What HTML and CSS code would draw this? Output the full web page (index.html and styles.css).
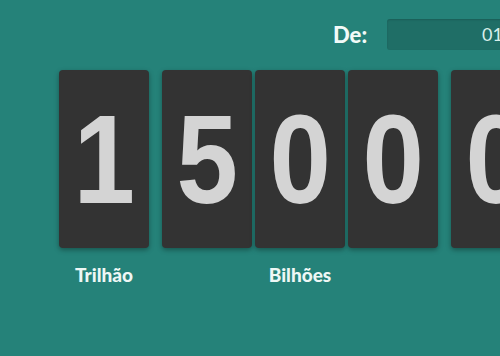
FILE: index.html
```html
<!DOCTYPE html>
<html lang="pt">
<head>
    <meta charset="UTF-8">
    <meta name="viewport" content="width=device-width, initial-scale=1.0">
    <title>Contador</title>
    <link rel="stylesheet" href="styles.css">
</head>
<body>
    <div class="page">
        <div class="header">
            <span class="label-de">De:</span>
            <div class="field">01/01/2000</div>
        </div>

        <div class="counter">
            <div class="group">
                <div class="card"><span class="digit">1</span></div>
            </div>
            <div class="group">
                <div class="card"><span class="digit">5</span></div>
                <div class="card"><span class="digit">0</span></div>
                <div class="card"><span class="digit">0</span></div>
            </div>
            <div class="group">
                <div class="card"><span class="digit">0</span></div>
                <div class="card"><span class="digit">0</span></div>
                <div class="card"><span class="digit">0</span></div>
            </div>
        </div>

        <div class="labels">
            <div class="unit unit-1">Trilhão</div>
            <div class="unit unit-3">Bilhões</div>
            <div class="unit unit-3">Milhões</div>
        </div>
    </div>
</body>
</html>
```

FILE: styles.css
```css
body, html {
    margin: 0;
    padding: 0;
    height: 100%;
    overflow: hidden;
    background-color: #258279;
    font-family: Lato, "Liberation Sans", sans-serif;
}
.page {
    width: 900px;
    padding-top: 19px;
}
.header {
    display: flex;
    align-items: center;
    padding-left: 333px;
    height: 31px;
}
.label-de {
    font-weight: 900;
    font-size: 22px;
    color: #f2faf8;
    width: 54px;
}
.field {
    width: 300px;
    height: 31px;
    box-sizing: border-box;
    padding-left: 95px;
    line-height: 31px;
    font-size: 18px;
    color: #d9efea;
    background-color: #1f6e66;
    border-radius: 3px;
    box-shadow: inset 0 1px 2px rgba(0, 0, 0, 0.15);
}
.counter {
    display: flex;
    gap: 13px;
    padding-left: 59px;
    margin-top: 20px;
}
.group {
    display: flex;
    gap: 3px;
}
.card {
    width: 90px;
    height: 178px;
    display: flex;
    justify-content: center;
    align-items: center;
    background-color: #333333;
    border-radius: 4px;
    box-shadow: 0 2px 5px rgba(0, 0, 0, 0.35);
}
.digit {
    display: block;
    font-family: "Liberation Sans", Arial, sans-serif;
    font-weight: bold;
    font-size: 127px;
    line-height: 1;
    color: #d4d4d4;
    transform: scaleX(0.87);
}
.labels {
    display: flex;
    gap: 13px;
    padding-left: 59px;
    margin-top: 15px;
}
.unit {
    text-align: center;
    font-weight: 900;
    font-size: 19px;
    color: #eef7f5;
}
.unit-1 {
    width: 90px;
}
.unit-3 {
    width: 276px;
}
```
